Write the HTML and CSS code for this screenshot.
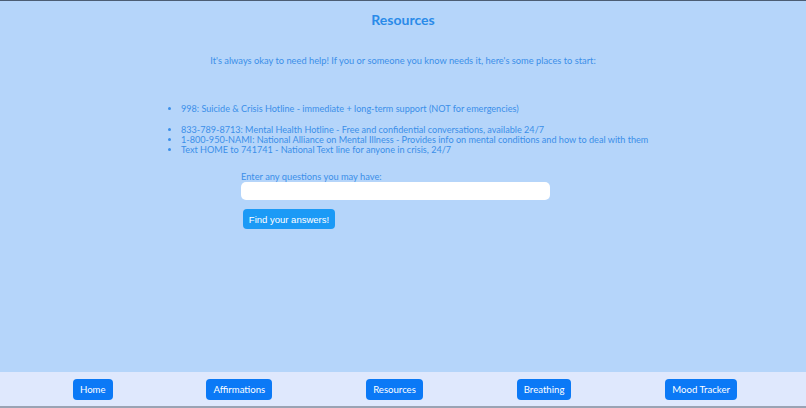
FILE: index.html
```html
<!DOCTYPE html>
<html>
<head>
<meta charset="utf-8">
<link rel="stylesheet" href="styles.css">
</head>
<body>
<div class="page">
  <main class="content">
    <h1 class="title">Resources</h1>
    <p class="intro">It's always okay to need help! If you or someone you know needs it, here's some places to start:</p>
    <ul class="list">
      <li>998: Suicide &amp; Crisis Hotline - immediate + long-term support (NOT for emergencies)</li>
      <li class="gap">833-789-8713: Mental Health Hotline - Free and confidential conversations, available 24/7</li>
      <li>1-800-950-NAMI: National Alliance on Mental Illness - Provides info on mental conditions and how to deal with them</li>
      <li>Text HOME to 741741 - National Text line for anyone in crisis, 24/7</li>
    </ul>
    <form class="ask">
      <label class="label" for="q">Enter any questions you may have:</label>
      <input class="field" id="q" type="text">
      <button class="find" type="button">Find your answers!</button>
    </form>
  </main>
  <nav class="nav">
    <a class="navbtn">Home</a>
    <a class="navbtn">Affirmations</a>
    <a class="navbtn">Resources</a>
    <a class="navbtn">Breathing</a>
    <a class="navbtn">Mood Tracker</a>
  </nav>
</div>
</body>
</html>
```
FILE: styles.css
```css
* { box-sizing: border-box; }
html, body { margin: 0; padding: 0; }
body {
  width: 806px;
  height: 408px;
  background: #b5d5fa;
  font-family: "Lato", "DejaVu Sans", sans-serif;
  color: #3b8fe9;
  overflow: hidden;
}
.page {
  height: 408px;
  display: flex;
  flex-direction: column;
  border-top: 1px solid #4c5d73;
}
.content {
  flex: 1;
  display: flex;
  flex-direction: column;
}
.title {
  margin: 10px 0 0;
  text-align: center;
  font-size: 14px;
  font-weight: 700;
  color: #2a8be9;
  line-height: 17px;
}
.intro {
  margin: 27px 0 0;
  text-align: center;
  font-size: 9.3px;
  line-height: 12px;
}
.list {
  margin: 37px 0 0;
  padding-left: 181px;
  font-size: 9.1px;
  line-height: 10px;
}
.list li.gap { margin-top: 11px; }
.ask {
  margin: 16px 0 0 241px;
  display: flex;
  flex-direction: column;
  align-items: flex-start;
}
.label {
  font-size: 9.3px;
  line-height: 11px;
}
.field {
  margin: 0;
  width: 309px;
  height: 18px;
  border: none;
  border-radius: 5px;
  background: #ffffff;
}
.find {
  margin: 9px 0 0 2px;
  width: 92px;
  height: 20px;
  border: none;
  border-radius: 4px;
  background: #1b9af6;
  color: #ffffff;
  font-family: "Liberation Sans", Arial, sans-serif;
  font-size: 9.5px;
  padding: 0;
}
.nav {
  height: 36px;
  background: #dfe8fd;
  border-bottom: 2px solid #9aa3b4;
  display: flex;
  justify-content: space-around;
  align-items: center;
  padding: 0 22px 0 26px;
}
.navbtn {
  background: #0b79f6;
  color: #ffffff;
  border-radius: 4px;
  height: 21px;
  padding: 0 7px;
  font-size: 9.6px;
  line-height: 21px;
  display: block;
}
```
